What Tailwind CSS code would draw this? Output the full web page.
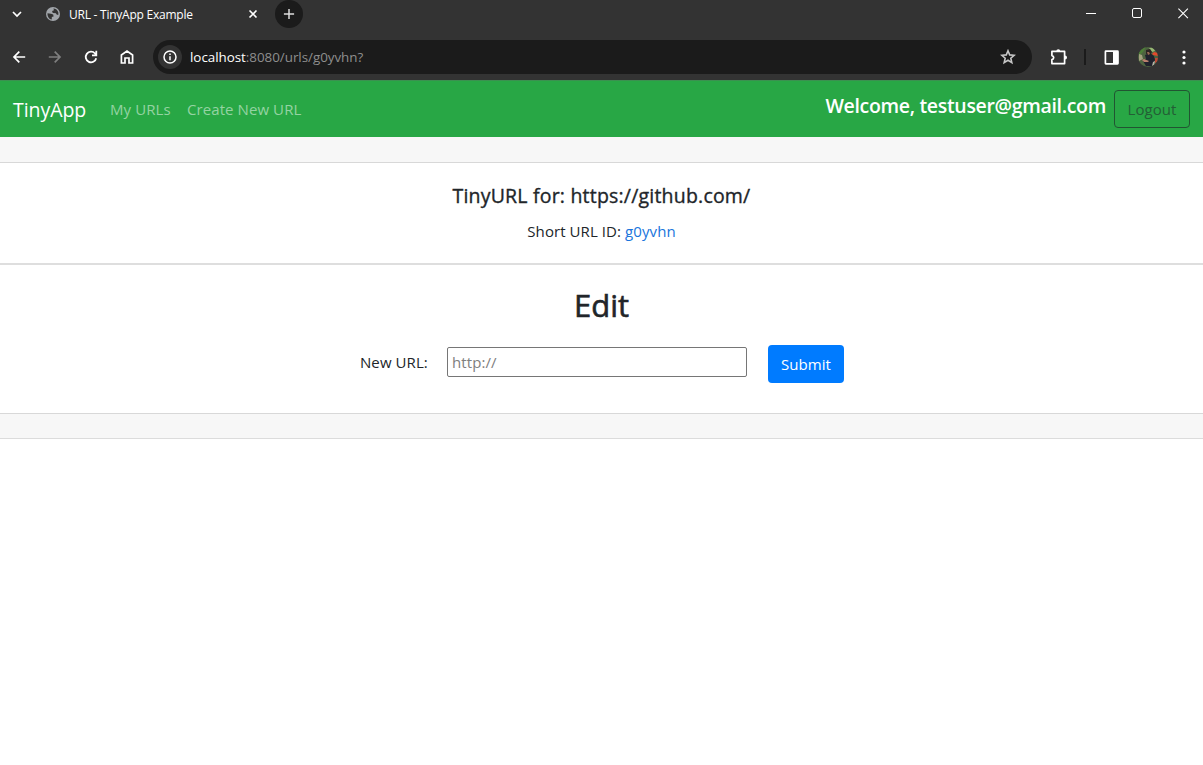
<!DOCTYPE html>
<html lang="en">
<head>
<meta charset="utf-8">
<title>URL - TinyApp Example</title>
<script src="https://cdn.jsdelivr.net/npm/@tailwindcss/browser@4"></script>
</head>
<body class="h-[765px] w-[1203px] overflow-hidden bg-white font-['Open_Sans',sans-serif] text-[15px] tracking-[0.08px] text-[#212529] whitespace-nowrap">
<div class="h-20 bg-[#333333] text-white">
  <div class="flex h-7 items-center">
    <svg class="ml-[10px] size-[14px]" viewBox="0 0 14 14" fill="none" stroke="#fff" stroke-width="1.7"><path d="M3 5l4 4 4-4"/></svg>
    <svg class="ml-[22px] size-[14px]" viewBox="0 0 14 14"><circle cx="7" cy="7" r="7" fill="#a1a5aa"/><path d="M1.5 6.2 5 6.7 7.2 7.6 7.6 9.4 5.8 10 5.8 12.5C3 12.2 1.3 9.5 1.5 6.2ZM7.4 1.5C9.5 1.5 11.8 3 12.4 5.7L12.3 8 10.6 7.6 9.9 6.2 7.2 6 6 5 6.6 3.8 8 3.2Z" fill="#333"/></svg>
    <span class="ml-[9px] mt-[2px] w-[178px] text-[12px] leading-4 tracking-[-0.24px]">URL - TinyApp Example</span>
    <svg class="ml-px size-[10px]" viewBox="0 0 10 10" stroke="#fff" stroke-width="1.6"><path d="M1.5 1.5l7 7m0-7l-7 7"/></svg>
    <div class="ml-[17px] flex size-7 items-center justify-center rounded-full bg-[#1b1b1b]">
      <svg class="size-3" viewBox="0 0 12 12" stroke="#ddd" stroke-width="1.5"><path d="M6 .9v10.2M.9 6h10.2"/></svg>
    </div>
    <svg class="ml-auto h-3 w-[11px]" viewBox="0 0 11 12" stroke="#fff"><path d="M0 5.5h10"/></svg>
    <svg class="ml-[35px] mb-[2px] size-[11px]" viewBox="0 0 11 11" fill="none" stroke="#fff"><rect x=".5" y=".5" width="9" height="9" rx="1.5"/></svg>
    <svg class="ml-[35px] mr-[14px] mb-[2px] size-[11px]" viewBox="0 0 11 11" stroke="#fff" stroke-width="1.1"><path d="M.4.6l9.5 9.5m0-9.5L.4 10.1"/></svg>
  </div>
  <div class="flex h-[58px] items-center">
    <svg class="ml-[12px] size-[14px]" viewBox="0 0 14 14" fill="none" stroke="#fff" stroke-width="1.7"><path d="M13.2 7H2M7.3 1.7 2 7l5.3 5.3"/></svg>
    <svg class="ml-[22px] size-[14px]" viewBox="0 0 14 14" fill="none" stroke="#7f7f7f" stroke-width="1.7"><path d="M.8 7H12M6.7 1.7 12 7l-5.3 5.3"/></svg>
    <svg class="ml-[22px] size-[14px]" viewBox="0 0 14 14" fill="none" stroke="#fff" stroke-width="1.8"><path d="M12.2 8.2A5.3 5.3 0 1 1 11 3.5L12.5 5M12.3.8v4.5H8"/></svg>
    <svg class="ml-[22px] size-[14px]" viewBox="0 0 14 14" fill="none" stroke="#fff" stroke-width="1.7"><path d="M1.4 13V5L7 1.1 12.6 5v8H9V8H5v5Z"/></svg>
    <div class="ml-[19px] flex h-[34px] w-[879px] items-center rounded-full bg-[#1b1b1b]">
      <div class="ml-[5px] flex size-6 items-center justify-center rounded-full bg-[#333]">
        <svg class="size-[14px]" viewBox="0 0 14 14" fill="none" stroke="#fff" stroke-width="1.5"><circle cx="7" cy="7" r="6"/><path d="M7 6.2v4M7 3.6v1.5"/></svg>
      </div>
      <span class="ml-2 text-[13.4px] leading-5 tracking-[-0.03px] text-[#8e8e8e]"><span class="text-white">localhost</span>:8080/urls/g0yvhn?</span>
      <svg class="ml-auto mr-[16px] size-4" viewBox="0 0 16 16" fill="none" stroke="#c7c7c7" stroke-width="1.6"><path d="M8 1.8l1.7 4.1 4.5.4-3.4 2.9 1 4.4L8 11.2l-3.8 2.4 1-4.4-3.4-2.9 4.5-.4Z"/></svg>
    </div>
    <svg class="mb-px ml-[18px] size-[18px]" viewBox="0 0 18 18" fill="none"><path d="M1.9 3.4H14.6v12.2H1.9v-4c2.4-.4 2.4-3.6 0-4V3.4Z" stroke="#fff" stroke-width="1.7" stroke-linejoin="round"/><path d="M6.3 3.2a2 2 0 0 1 4 0ZM15 7.6a2 2 0 0 1 0 4Z" fill="#fff"/></svg>
    <div class="ml-4 h-4 w-[2px] bg-[#1b1b1b]"></div>
    <svg class="ml-[18px] h-[15px] w-[15px]" viewBox="0 0 15 15"><rect x="1.4" y="1.2" width="12.6" height="12.6" rx=".5" fill="none" stroke="#fff" stroke-width="1.7"/><path d="M9 1h5v13H9Z" fill="#fff"/></svg>
    <svg class="ml-[19px] size-5 rounded-full" viewBox="0 0 20 20"><rect width="20" height="20" fill="#4d6340"/><path d="M0 0h8L5 5 1 9Z" fill="#4d7e37"/><path d="M11 1l4-1 2 4-3 1Z" fill="#97b774"/><path d="M1 7l3 1 1 4-4 2Z" fill="#a3a17e"/><path d="M14 7l2-2 4 1v3l-5-1Z" fill="#e4492b"/><path d="M17 11h3v4l-3 1Z" fill="#bd4936"/><path d="M7 8l5-2 4 3 1 4-3 6H8L5 14l3-2Z" fill="#20222d"/><path d="M8 3l4-1 2 3-2 3-4-1Z" fill="#2b2422"/><path d="M9 5h2l1 2-2 1Z" fill="#966954"/><path d="M4 13l2-1 5 2-1 1H6Z" fill="#ba806d"/><path d="M15 15l2-1-1 4-2 1Z" fill="#b5b3a8"/></svg>
    <svg class="ml-auto mr-[17px] h-[15px] w-1" viewBox="0 0 4 15" fill="#fff"><circle cx="2" cy="2" r="1.6"/><circle cx="2" cy="7.5" r="1.6"/><circle cx="2" cy="13" r="1.6"/></svg>
  </div>
</div>
<nav class="flex h-[57px] items-center border-t border-[#3b9150] bg-[#28a745] px-[13px]">
  <a class="mt-px w-[97px] text-[19.5px] leading-7 tracking-[-0.05px] text-white">TinyApp</a>
  <a class="mt-px w-[77px] text-[#94d3a2]">My URLs</a>
  <a class="mt-px text-[#94d3a2]">Create New URL</a>
  <div class="ml-auto flex">
    <span class="mr-2 pt-[4px] text-[19.5px] font-semibold leading-6 tracking-[-0.32px] text-white">Welcome, testuser@gmail.com</span>
    <button class="h-[38px] w-[76px] rounded border border-[#215532] text-[#245e36]">Logout</button>
  </div>
</nav>
<div class="h-[26px] border-b border-[#d8d8d8] bg-[#f7f7f7]"></div>
<section class="flex h-[102px] flex-col items-center border-b-2 border-[#dedede] pt-[21px]">
  <h5 class="text-[19.5px] leading-6 tracking-[0.2px] [-webkit-text-stroke:0.35px_#212529]">TinyURL for: https://github.com/</h5>
  <p class="mt-[11px] leading-6">Short URL ID: <a class="text-[#1a75dc]">g0yvhn</a></p>
</section>
<section class="flex h-[149px] flex-col border-b border-[#d8d8d8] pt-[21px]">
  <h2 class="text-center text-[31px] leading-[38px] tracking-[0px] [-webkit-text-stroke:0.6px_#212529]">Edit</h2>
  <form class="mt-[21px] flex pl-[360px]">
    <label class="mt-[5px] w-[87px] leading-6">New URL:</label>
    <input class="mt-[2px] h-[30px] w-[300px] rounded-[2px] border border-[#767676] px-1 placeholder:text-[#808080]" placeholder="http://">
    <button class="ml-[21px] h-[38px] w-[76px] rounded bg-[#007bff] text-white">Submit</button>
  </form>
</section>
<div class="h-[25px] border-b border-[#dcdcdc] bg-[#f7f7f7]"></div>
</body>
</html>
